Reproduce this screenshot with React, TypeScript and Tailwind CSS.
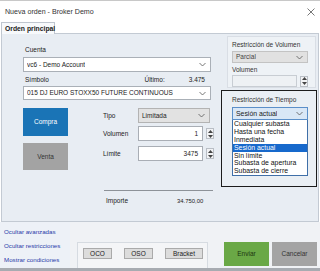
import React from 'react';

// ─── Small controls ──────────────────────────────────────────────────────────

function Chevron() {
  return (
    <svg width="7" height="5" viewBox="0 0 7 5" className="shrink-0">
      <path d="M0.5 1 L3.5 4 L6.5 1" fill="none" stroke="#555" strokeWidth="0.8" />
    </svg>
  );
}

function Spin() {
  return (
    <div className="w-[8px] h-[11px] ml-[3px] flex flex-col items-center justify-center gap-[2px] border border-[#b9bec5] bg-[#f2f3f5]">
      <svg width="5" height="3" viewBox="0 0 5 3"><path d="M0 3 L2.5 0 L5 3 Z" fill="#444" /></svg>
      <svg width="5" height="3" viewBox="0 0 5 3"><path d="M0 0 L2.5 3 L5 0 Z" fill="#444" /></svg>
    </div>
  );
}

function Select({ label, className }: { label: string; className: string }) {
  return (
    <div className={`flex items-center justify-between pl-[3px] pr-[4px] border ${className}`}>
      <span className="truncate">{label}</span>
      <Chevron />
    </div>
  );
}

function NumField({ value, width }: { value: string; width: string }) {
  return (
    <div className="flex items-center">
      <div className={`${width} h-[15px] bg-white border border-[#a9aeb5] flex items-center justify-end pr-[4px]`}>
        {value}
      </div>
      <Spin />
    </div>
  );
}

const TIME_OPTIONS = [
  'Cualquier subasta',
  'Hasta una fecha',
  'Inmediata',
  'Sesión actual',
  'Sin límite',
  'Subasta de apertura',
  'Subasta de cierre',
];

// ─── Main ────────────────────────────────────────────────────────────────────

export default function App() {
  return (
    <div className="w-[320px] h-[271px] bg-white flex flex-col overflow-hidden whitespace-nowrap text-[6.5px] leading-[8px] text-[#222] font-['Liberation_Sans',Arial,sans-serif] border-t border-[#c8c8c8]">
      {/* Title bar */}
      <div className="h-[21px] flex items-center justify-between pl-[5px] pr-[5px]">
        <span className="text-[7.1px] text-[#333]">Nueva orden - Broker Demo</span>
        <svg width="8" height="8" viewBox="0 0 8 8">
          <path d="M0.5 0.5 L7.5 7.5 M7.5 0.5 L0.5 7.5" stroke="#555" strokeWidth="0.8" />
        </svg>
      </div>

      {/* Tabs */}
      <div className="h-[11px] flex items-end pl-[1px]">
        <div className="h-[12px] w-[54px] -mb-px z-10 border border-b-0 border-[#bfc6cf] bg-[#f7f9fb] flex items-center pl-[3px] text-[6.8px] font-semibold text-[#222]">
          Orden principal
        </div>
      </div>

      {/* Main panel */}
      <div className="h-[189px] mx-[1px] bg-[#e8edf3] border border-[#c3cad3] flex">
        {/* Left column */}
        <div className="w-[219px] pl-[21px] pt-[12px] flex flex-col">
          <div className="h-[8px] pl-[2px]">Cuenta</div>
          <Select label="vc6  -  Demo Account" className="mt-[3px] w-[188px] h-[15px] bg-white border-[#aab0b7]" />
          <div className="mt-[4px] h-[8px] flex w-[182px] pl-[2px]">
            <span>Símbolo</span>
            <span className="ml-auto">Último:</span>
            <span className="ml-[24px]">3.475</span>
          </div>
          <Select label="015 DJ EURO STOXX50 FUTURE CONTINUOUS" className="mt-[2px] w-[188px] h-[14px] bg-white border-[#aab0b7]" />

          <div className="mt-[8px] flex">
            <div className="w-[45px] flex flex-col gap-[7px]">
              <div className="h-[28px] bg-[#1a74b6] text-white flex items-center justify-center">Compra</div>
              <div className="h-[27px] bg-[#a3a3a3] text-[#333] flex items-center justify-center">Venta</div>
            </div>
            <div className="ml-[35px] flex flex-col">
              <div className="h-[15px] flex items-center">
                <span className="w-[35px]">Tipo</span>
                <Select label="Limitada" className="w-[72px] h-[15px] bg-[#e2e2e2] border-[#b3b3b3]" />
              </div>
              <div className="mt-[3px] h-[15px] flex items-center">
                <span className="w-[35px]">Volumen</span>
                <NumField value="1" width="w-[65px]" />
              </div>
              <div className="mt-[5px] h-[15px] flex items-center">
                <span className="w-[35px]">Límite</span>
                <NumField value="3475" width="w-[65px]" />
              </div>
            </div>
          </div>

          <div className="mt-[20px] ml-[81px] w-[109px] h-px bg-[#8d9298]" />
          <div className="mt-[6px] ml-[83px] flex items-center">
            <span className="w-[71px]">Importe</span>
            <span className="text-[5.9px]">34.750,00</span>
          </div>
        </div>

        {/* Right column */}
        <div className="flex-1 flex flex-col pt-[2px]">
          <div className="ml-[6px] mr-[2px] h-[52px] bg-[#eef2f6] border border-[#d9dee5] pl-[4px] pt-[4px] flex flex-col">
            <div className="h-[8px] text-[#333]">Restricción de Volumen</div>
            <Select label="Parcial" className="mt-[2px] w-[76px] h-[12px] bg-[#e1e1e1] border-[#c3c3c3] text-[#444]" />
            <div className="mt-[3px] h-[8px] text-[#333]">Volumen</div>
            <div className="mt-[1px] flex items-center">
              <div className="w-[65px] h-[12px] bg-[#eef1f4] border border-[#c8cdd3]" />
              <Spin />
            </div>
          </div>

          <div className="mt-[2px] mr-[1px] h-[97px] border border-[#1c1c1c] bg-[#eaeff4] pl-[10px] pt-[5px] flex flex-col">
            <div className="h-[8px] text-[#333]">Restricción de Tiempo</div>
            <div className="relative mt-[3px] w-[76px]">
              <Select label="Sesión actual" className="w-[76px] h-[13px] bg-[#d9e7f6] border-[#5b8fc9] text-[6.9px]" />
              <div className="absolute left-0 top-[13px] w-[76px] bg-white border border-[#3f6fa8] border-t-0 flex flex-col text-[6.9px] text-[#111]">
                {TIME_OPTIONS.map(o => (
                  <div
                    key={o}
                    className={`h-[7.9px] leading-[8px] pl-[1px] ${o === 'Sesión actual' ? 'bg-[#1769cc] text-white' : ''}`}
                  >
                    {o}
                  </div>
                ))}
              </div>
            </div>
          </div>
        </div>
      </div>

      {/* Bottom bar */}
      <div className="flex-1 flex bg-[#f0f2f5]">
        <div className="w-[70px] bg-[#edf1f7] pl-[4px] pt-[6px] flex flex-col gap-[6px] text-[6.2px] text-[#2a3aa8]">
          <span className="h-[8px]">Ocultar avanzadas</span>
          <span className="h-[8px]">Ocultar restricciones</span>
          <span className="h-[8px]">Mostrar condiciones</span>
        </div>
        <div className="ml-[7px] mt-[20px] w-[131px] bg-[#f4f5f7] border border-b-0 border-[#d6dbe1] flex items-start pl-[5px] pt-[5px] gap-[12px]">
          <div className="w-[29px] h-[11px] bg-[#dcdcdc] border border-[#aaaaaa] flex items-center justify-center">OCO</div>
          <div className="w-[29px] h-[11px] bg-[#dcdcdc] border border-[#aaaaaa] flex items-center justify-center">OSO</div>
          <div className="w-[38px] h-[11px] bg-[#dcdcdc] border border-[#aaaaaa] flex items-center justify-center">Bracket</div>
        </div>
        <div className="ml-[16px] mt-[20px] flex gap-[3px]">
          <div className="w-[45px] h-[24px] bg-[#6aa846] text-[#1d3510] flex items-center justify-center">Enviar</div>
          <div className="w-[45px] h-[24px] bg-[#a4a4a4] text-[#333] flex items-center justify-center">Cancelar</div>
        </div>
      </div>
      <div className="h-[3px] bg-[#a7abb1]" />
    </div>
  );
}
